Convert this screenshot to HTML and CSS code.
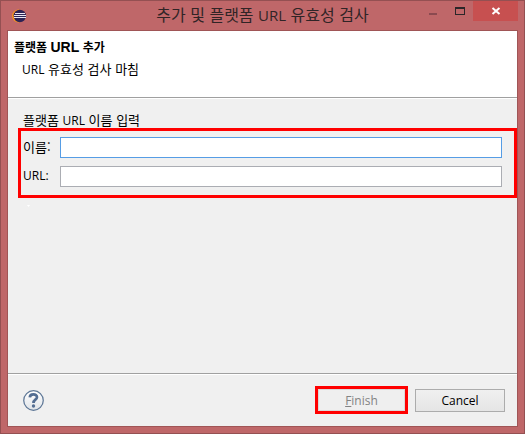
FILE: index.html
```html
<!DOCTYPE html>
<html lang="ko">
<head>
<meta charset="utf-8">
<title>추가 및 플랫폼 URL 유효성 검사</title>
<link rel="stylesheet" href="styles.css">
</head>
<body>
<div class="window">
  <header class="titlebar">
    <svg class="app-icon" viewBox="0 0 14 14" aria-hidden="true">
      <circle cx="6.500" cy="7" r="6.500" fill="#f7941e"/>
      <circle cx="7.800" cy="7" r="6.200" fill="#2c2255"/>
      <path d="M3 4.500h10M2 6.500h12M2 8.500h12" stroke="#e8e6f2" stroke-width="1"/>
    </svg>
    <h1 class="title">추가 및 플랫폼 <span class="title-latin">URL</span> 유효성 검사</h1>
    <div class="controls">
      <button class="control" type="button" aria-label="최소화">
        <svg viewBox="0 0 10 10" shape-rendering="crispEdges"><path d="M1 7h8v2H1z" fill="#8b4a50"/></svg>
      </button>
      <button class="control" type="button" aria-label="최대화">
        <svg viewBox="0 0 10 10" shape-rendering="crispEdges"><path d="M0 1h10v8H0zM1 3v5h8V3z" fill="#2b2629" fill-rule="evenodd"/></svg>
      </button>
      <button class="control close" type="button" aria-label="닫기">
        <svg viewBox="0 0 10 10"><path d="M1.500 2l7 6M8.500 2l-7 6" stroke="#fff" stroke-width="2"/></svg>
      </button>
    </div>
  </header>
  <form class="dialog">
    <section class="banner">
      <h2 class="heading">플랫폼 <span class="heading-latin">URL</span> 추가</h2>
      <p class="message"><span class="latin">URL</span> 유효성 검사 마침</p>
    </section>
    <main class="content">
      <p class="group-title">플랫폼 <span class="latin">URL</span> 이름 입력</p>
      <div class="fields">
        <label for="name">이름:</label>
        <input class="active" id="name" type="text">
        <label class="latin" for="url">URL:</label>
        <input id="url" type="text">
      </div>
      <svg class="marker" viewBox="0 0 3 2" aria-hidden="true"><path d="M0 0h3L1.500 2z" fill="#fff"/></svg>
    </main>
    <footer class="actions">
      <button class="help" type="button" aria-label="도움말">
        <svg viewBox="0 0 20 20">
          <defs><linearGradient id="disc" x2="0" y2="1"><stop stop-color="#fff"/><stop offset="1" stop-color="#dfe3e8"/></linearGradient></defs>
          <circle cx="10" cy="10" r="9.300" fill="url(#disc)" stroke="#5f7897" stroke-width="1.200"/>
          <path d="M6.500 7C6.600 3.300 13.500 3.300 13.300 6.900C13.200 9.300 10 9.200 10 12.300" fill="none" stroke="#536d92" stroke-width="2.600"/>
          <circle cx="10" cy="15.200" r="1.600" fill="#536d92"/>
        </svg>
      </button>
      <div class="highlight"><button class="button" type="submit" disabled><u>F</u>inish</button></div>
      <button class="button" type="button">Cancel</button>
    </footer>
  </form>
</div>
</body>
</html>
```
FILE: styles.css
```css
* { box-sizing: border-box; }

body {
  margin: 0;
  color: #000;
  font: 13px/16px "Noto Sans CJK KR", sans-serif;
}

h1, h2, p { margin: 0; font-weight: 400; }

button { padding: 0; border: 0; background: none; }

svg { display: block; }

.latin { font-family: "Open Sans", sans-serif; font-size: 12px; }

.window {
  display: flex;
  flex-direction: column;
  min-height: 100vh;
  padding: 0 6px 6px;
  border: 1px solid #945052;
  background: #bf6769;
}

.titlebar {
  display: grid;
  grid-template-columns: 87px 1fr 87px;
  align-items: center;
  height: 29px;
}

.app-icon { width: 14px; height: 14px; margin-left: 5px; }

.title {
  padding-bottom: 2px;
  color: #302426;
  font-size: 16px;
  line-height: 26px;
  text-align: center;
  white-space: nowrap;
}

.title-latin { font-family: "Open Sans", sans-serif; font-size: 15px; }

.controls { display: flex; align-self: start; justify-content: flex-end; }

.control { display: grid; place-items: center; flex: none; width: 27px; height: 20px; }

.control svg { width: 10px; height: 10px; }

.close { width: 45px; background: #c75050; }

.dialog {
  display: flex;
  flex: 1;
  flex-direction: column;
  border: 1px solid #a05556;
  background: #f0f0f0;
}

.banner {
  height: 67px;
  padding: 8px 6px;
  border-bottom: 1px solid #a0a0a0;
  background: #fff;
}

.heading { font-size: 12px; font-weight: 700; }

.heading-latin { font-family: "Liberation Sans", sans-serif; font-size: 14px; }

.message { margin: 6px 8px; }

.content { flex: 1; padding-top: 14px; border-top: 1px solid #fff; }

.group-title { padding-left: 15px; line-height: 14px; }

.fields {
  display: grid;
  grid-template-columns: 29px 1fr;
  gap: 8px;
  align-items: center;
  margin-left: 10px;
  padding: 6px 12px 8px 2px;
  border: 3px solid #f00;
}

.fields label { padding-bottom: 2px; white-space: nowrap; }

.fields input {
  width: 100%;
  height: 21px;
  padding: 0 4px;
  border: 1px solid #abadb3;
  outline: 0;
  background: #fff;
  font: inherit;
}

.fields .active { border-color: #569de5; }

.marker { width: 3px; height: 2px; margin: 7px 19px; }

.actions {
  display: flex;
  align-items: center;
  gap: 7px;
  height: 53px;
  padding: 0 12px 0 15px;
  border-top: 1px solid #a0a0a0;
  box-shadow: inset 0 1px #fff;
}

.help { margin-right: auto; }

.help svg { width: 21px; height: 21px; }

.highlight { border: 3px solid #f00; }

.button {
  display: block;
  width: 90px;
  height: 23px;
  padding-top: 1px;
  border: 1px solid #acacac;
  background: linear-gradient(#f0f0f0, #e5e5e5);
  color: #000;
  font: 12px/16px "Open Sans", sans-serif;
}

.highlight .button {
  width: 87px;
  height: 22px;
  border-color: #d9d9d9;
  background: #efefef;
  color: #838383;
}
```
